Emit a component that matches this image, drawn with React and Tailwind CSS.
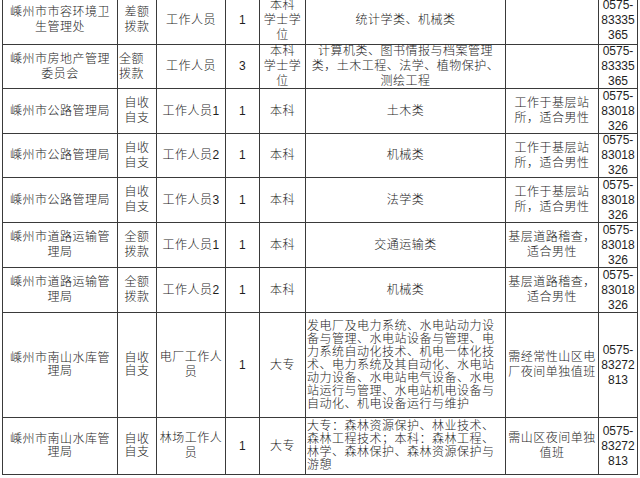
const rows = [
  {
    org: ['嵊州市市容环境卫', '生管理处'],
    fund: ['差额', '拨款'],
    pos: ['工作人员'],
    n: '1',
    edu: ['本科', '学士学', '位'],
    major: ['统计学类、机械类'],
    note: [],
    tel: ['0575-', '83335', '365'],
  },
  {
    org: ['嵊州市房地产管理', '委员会'],
    fund: ['全额', '拨款'],
    fundLeft: true,
    pos: ['工作人员'],
    n: '3',
    edu: ['本科', '学士学', '位'],
    major: ['计算机类、图书情报与档案管理', '类，土木工程、法学、植物保护、', '测绘工程'],
    note: [],
    tel: ['0575-', '83335', '365'],
  },
  {
    org: ['嵊州市公路管理局'],
    fund: ['自收', '自支'],
    pos: ['工作人员1'],
    n: '1',
    edu: ['本科'],
    major: ['土木类'],
    note: ['工作于基层站', '所，适合男性'],
    tel: ['0575-', '83018', '326'],
  },
  {
    org: ['嵊州市公路管理局'],
    fund: ['自收', '自支'],
    pos: ['工作人员2'],
    n: '1',
    edu: ['本科'],
    major: ['机械类'],
    note: ['工作于基层站', '所，适合男性'],
    tel: ['0575-', '83018', '326'],
  },
  {
    org: ['嵊州市公路管理局'],
    fund: ['自收', '自支'],
    pos: ['工作人员3'],
    n: '1',
    edu: ['本科'],
    major: ['法学类'],
    note: ['工作于基层站', '所，适合男性'],
    tel: ['0575-', '83018', '326'],
  },
  {
    org: ['嵊州市道路运输管', '理局'],
    fund: ['全额', '拨款'],
    pos: ['工作人员1'],
    n: '1',
    edu: ['本科'],
    major: ['交通运输类'],
    note: ['基层道路稽查，', '适合男性'],
    tel: ['0575-', '83018', '326'],
  },
  {
    org: ['嵊州市道路运输管', '理局'],
    fund: ['全额', '拨款'],
    pos: ['工作人员2'],
    n: '1',
    edu: ['本科'],
    major: ['机械类'],
    note: ['基层道路稽查，', '适合男性'],
    tel: ['0575-', '83018', '326'],
  },
  {
    tight: true,
    org: ['嵊州市南山水库管', '理局'],
    fund: ['自收', '自支'],
    pos: ['电厂工作人', '员'],
    n: '1',
    edu: ['大专'],
    major: [
      '发电厂及电力系统、水电站动力设',
      '备与管理、水电站设备与管理、电',
      '力系统自动化技术、机电一体化技',
      '术、电力系统及其自动化、水电站',
      '动力设备、水电站电气设备、水电',
      '站运行与管理、水电站机电设备与',
      '自动化、机电设备运行与维护',
    ],
    majorLeft: true,
    note: ['需经常性山区电', '厂夜间单独值班'],
    tel: ['0575-', '83272', '813'],
  },
  {
    tight: true,
    org: ['嵊州市南山水库管', '理局'],
    fund: ['自收', '自支'],
    pos: ['林场工作人', '员'],
    n: '1',
    edu: ['大专'],
    major: [
      '大专：森林资源保护、林业技术、',
      '森林工程技术；本科：森林工程、',
      '林学、森林保护、森林资源保护与',
      '游憩',
    ],
    majorLeft: true,
    note: ['需山区夜间单独', '值班'],
    tel: ['0575-', '83272', '813'],
  },
]

function Cell({ lines, left, tight, className = '' }) {
  return (
    <div
      className={`bg-white min-h-0 flex flex-col justify-center ${left ? 'items-start pl-[1px]' : 'items-center'} ${tight ? 'leading-[13px]' : 'leading-[15px]'} ${className}`}
    >
      {lines.map((t, i) => (
        <span key={i} className="whitespace-nowrap">{t}</span>
      ))}
    </div>
  )
}

export default function App() {
  return (
    <div
      className="w-[640px] h-[478px] overflow-hidden bg-white text-[#1e1e1e] text-[12px] font-light tracking-[0.5px]"
      style={{ fontFamily: '"Liberation Sans", "Noto Sans CJK SC", sans-serif' }}
    >
      <div className="ml-[2px] -mt-[5px] w-[636px] grid grid-cols-[114px_38px_68px_33px_45px_199px_92px_38px] grid-rows-[48px_43px_44px_43px_44px_44px_44px_104px_56px] gap-px p-px bg-[#3a3a3a]">
        {rows.map((r, i) => (
          <div key={i} className="contents">
            <Cell lines={r.org} tight={r.tight} />
            <Cell lines={r.fund} tight={r.tight} left={r.fundLeft} />
            <Cell lines={r.pos} />
            <Cell lines={[r.n]} />
            <Cell lines={r.edu} />
            <Cell lines={r.major} left={r.majorLeft} tight={r.tight} />
            <Cell lines={r.note} />
            <Cell lines={r.tel} className="tracking-normal" />
          </div>
        ))}
      </div>
    </div>
  )
}
